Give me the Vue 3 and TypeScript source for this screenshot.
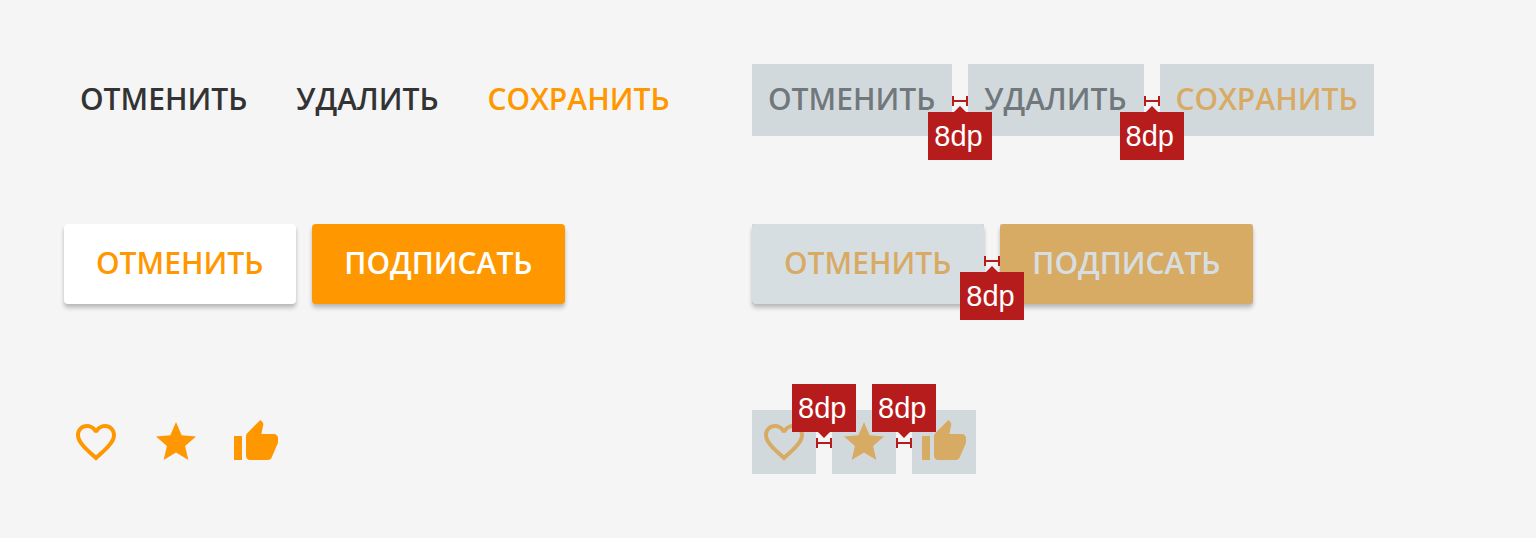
<script setup lang="ts">
type Tone = 'dark' | 'accent'

interface Action {
  label: string
  tone: Tone
}

interface IconAction {
  label: string
  path: string
}

const flatActions: Action[] = [
  { label: 'ОТМЕНИТЬ', tone: 'dark' },
  { label: 'УДАЛИТЬ', tone: 'dark' },
  { label: 'СОХРАНИТЬ', tone: 'accent' },
]

const raisedActions: { label: string; kind: 'white' | 'filled' }[] = [
  { label: 'ОТМЕНИТЬ', kind: 'white' },
  { label: 'ПОДПИСАТЬ', kind: 'filled' },
]

const iconActions: IconAction[] = [
  {
    label: 'Нравится',
    path: 'M16.5 3c-1.74 0-3.41.81-4.5 2.09C10.91 3.81 9.24 3 7.5 3 4.42 3 2 5.42 2 8.5c0 3.78 3.4 6.86 8.55 11.54L12 21.35l1.45-1.32C18.6 15.36 22 12.28 22 8.5 22 5.42 19.58 3 16.5 3zm-4.4 15.55l-.1.1-.1-.1C7.14 14.24 4 11.39 4 8.5 4 6.5 5.5 5 7.5 5c1.54 0 3.04.99 3.57 2.36h1.87C13.46 5.99 14.96 5 16.5 5c2 0 3.5 1.5 3.5 3.5 0 2.89-3.14 5.74-7.9 10.05z',
  },
  {
    label: 'В избранное',
    path: 'M12 17.27L18.18 21l-1.64-7.03L22 9.24l-7.19-.61L12 2 9.19 8.63 2 9.24l5.46 4.73L5.82 21z',
  },
  {
    label: 'Одобрить',
    path: 'M1 21h4V9H1v12zm22-11c0-1.1-.9-2-2-2h-6.31l.95-4.57.03-.32c0-.41-.17-.79-.44-1.06L14.17 1 7.59 7.59C7.22 7.95 7 8.45 7 9v10c0 1.1.9 2 2 2h9c.83 0 1.54-.5 1.84-1.22l3.02-7.05c.09-.23.14-.47.14-.73v-2z',
  },
]

const panels: { id: string; spec: boolean }[] = [
  { id: 'plain', spec: false },
  { id: 'spec', spec: true },
]
</script>

<template>
  <main class="board">
    <section v-for="panel in panels" :key="panel.id" class="panel" :class="{ spec: panel.spec }">
      <div class="row">
        <template v-for="(action, i) in flatActions" :key="action.label">
          <span v-if="i > 0" class="gap">
            <span v-if="panel.spec" class="marker"><span class="tag">8dp</span></span>
          </span>
          <button type="button" class="btn flat" :class="action.tone">{{ action.label }}</button>
        </template>
      </div>

      <div class="row raised-row">
        <template v-for="(action, i) in raisedActions" :key="action.label">
          <span v-if="i > 0" class="gap">
            <span v-if="panel.spec" class="marker"><span class="tag">8dp</span></span>
          </span>
          <button type="button" class="btn raised" :class="action.kind">{{ action.label }}</button>
        </template>
      </div>

      <div class="row icon-row">
        <template v-for="(action, i) in iconActions" :key="action.label">
          <span v-if="i > 0" class="gap">
            <span v-if="panel.spec" class="marker up"><span class="tag">8dp</span></span>
          </span>
          <button type="button" class="btn icon" :aria-label="action.label">
            <svg viewBox="0 0 24 24" aria-hidden="true"><path :d="action.path" /></svg>
          </button>
        </template>
      </div>
    </section>
  </main>
</template>

<style>
body {
  margin: 0;
  background: #f5f5f5;
}
</style>

<style scoped>
.board {
  display: grid;
  grid-template-columns: repeat(2, minmax(0, 1fr));
  padding: 64px 96px 64px 64px;
  font-family: "Open Sans", "Noto Sans", sans-serif;
}

.row {
  display: flex;
}

.raised-row {
  margin-top: 88px;
}

.icon-row {
  margin-top: 106px;
}

.btn {
  position: relative;
  flex: none;
  margin: 0;
  border: 0;
  background: none;
  font-family: inherit;
  font-size: 30px;
  font-weight: 600;
  line-height: 40px;
  white-space: nowrap;
  cursor: pointer;
}

.flat {
  padding: 15px 17px 17px 16px;
}

.dark {
  color: #333;
}

.accent {
  color: #ff9800;
}

.raised {
  padding: 19px 33px 21px 32px;
  border-radius: 4px;
  box-shadow: 0 4px 4px rgba(0, 0, 0, 0.22), 0 1px 3px rgba(0, 0, 0, 0.05);
}

.white {
  background: #fff;
  color: #ff9800;
}

.filled {
  background: #ff9800;
  color: #fff;
}

.icon {
  padding: 8px;
}

.icon svg {
  display: block;
  width: 48px;
  height: 48px;
  fill: #ff9800;
}

.spec .btn::after {
  content: "";
  position: absolute;
  inset: 0;
  background: rgba(176, 190, 197, 0.5);
}

.gap {
  position: relative;
  flex: none;
  width: 16px;
}

/* Measuring bracket spanning the gap */
.marker {
  position: absolute;
  z-index: 1;
  top: 32px;
  left: 0;
  right: 0;
  box-sizing: border-box;
  height: 10px;
  border: solid #b71c1c;
  border-width: 0 2px;
  background: linear-gradient(#b71c1c, #b71c1c) center / 100% 2px no-repeat;
}

.marker.up {
  top: 28px;
}

.tag {
  position: absolute;
  top: 16px;
  left: 50%;
  box-sizing: border-box;
  width: 64px;
  margin-left: -32px;
  padding-left: 6px;
  background: #b71c1c;
  color: #fff;
  font-family: "Liberation Sans", Arial, sans-serif;
  font-size: 29px;
  line-height: 48px;
}

.tag::before {
  content: "";
  position: absolute;
  bottom: 100%;
  left: 50%;
  margin-left: -6px;
  border: 6px solid transparent;
  border-top-width: 0;
  border-bottom-color: #b71c1c;
}

.up .tag {
  top: auto;
  bottom: 16px;
}

.up .tag::before {
  top: 100%;
  bottom: auto;
  border-width: 6px 6px 0;
  border-top-color: #b71c1c;
}
</style>
